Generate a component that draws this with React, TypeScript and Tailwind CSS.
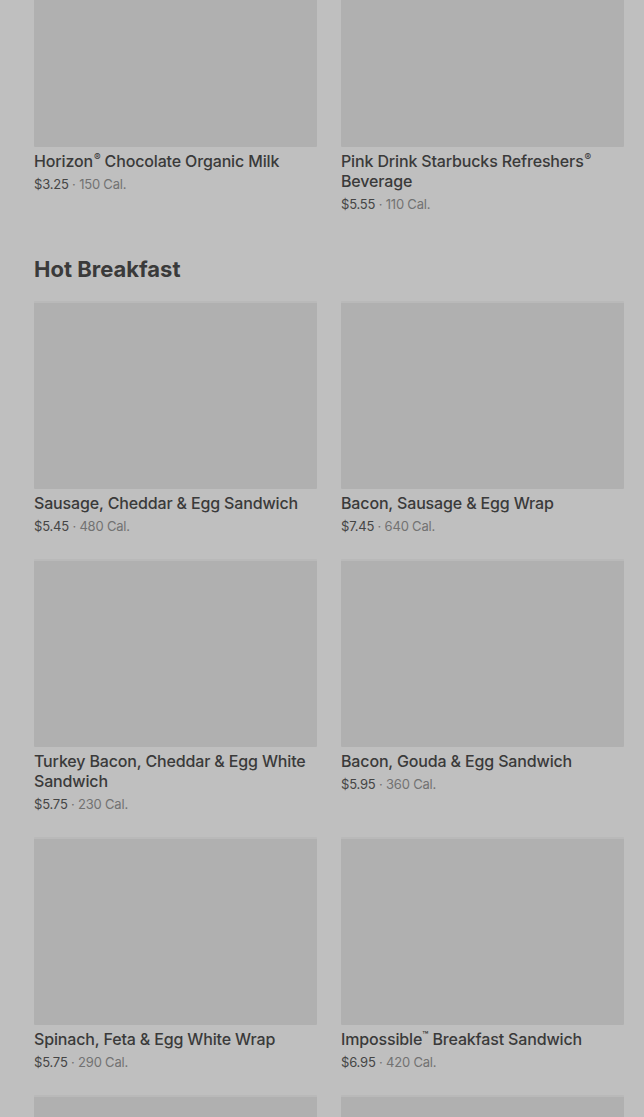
import React from "react";

type Item = { name: React.ReactNode; price: string; cal: string };

const R = () => <span className="text-[10px] leading-none align-top relative top-[1px] ml-[1px]">®</span>;
const TM = () => <span className="text-[10px] leading-none align-top relative top-[1px]">™</span>;

const top: Item[] = [
  { name: <>Horizon<R /> Chocolate Organic Milk</>, price: "$3.25", cal: "150 Cal." },
  { name: <>Pink Drink Starbucks Refreshers<R /> Beverage</>, price: "$5.55", cal: "110 Cal." },
];

const hot: Item[] = [
  { name: "Sausage, Cheddar & Egg Sandwich", price: "$5.45", cal: "480 Cal." },
  { name: "Bacon, Sausage & Egg Wrap", price: "$7.45", cal: "640 Cal." },
  { name: "Turkey Bacon, Cheddar & Egg White Sandwich", price: "$5.75", cal: "230 Cal." },
  { name: "Bacon, Gouda & Egg Sandwich", price: "$5.95", cal: "360 Cal." },
  { name: "Spinach, Feta & Egg White Wrap", price: "$5.75", cal: "290 Cal." },
  { name: <>Impossible<TM /> Breakfast Sandwich</>, price: "$6.95", cal: "420 Cal." },
  { name: "", price: "", cal: "" },
  { name: "", price: "", cal: "" },
];

function Card({ item }: { item: Item }) {
  return (
    <div className="flex flex-col">
      <div className="h-[188px] shrink-0 bg-[#b0b0b0] border-t-[2px] border-[#b9b9b9] rounded-[1px]" />
      {item.price && (
        <>
          <div className="mt-1 h-auto text-[16px] leading-[20px] font-medium text-[#3a3a3a] tracking-[-0.15px]">
            {item.name}
          </div>
          <div className="mt-[3px] text-[13px] leading-[20px] text-[#454545] tracking-[-0.2px]">
            {item.price}
            <span className="text-[#727272]"> · {item.cal}</span>
          </div>
        </>
      )}
    </div>
  );
}

export default function App() {
  return (
    <div
      className="min-h-[1117px] bg-[#bfbfbf] overflow-hidden"
      style={{ fontFamily: "Inter, 'Noto Sans', sans-serif" }}
    >
      <div className="-mt-[41px] pl-[34px] pr-[20px]">
        <div className="grid grid-cols-2 gap-x-6 gap-y-[23px]">
          {top.map((it, i) => (
            <Card key={i} item={it} />
          ))}
        </div>
        <h2 className="mt-[41px] text-[22px] leading-[28px] font-bold text-[#3a3a3a] tracking-[0px]">
          Hot Breakfast
        </h2>
        <div className="mt-[18px] grid grid-cols-2 gap-x-6 gap-y-[23px]">
          {hot.map((it, i) => (
            <Card key={i} item={it} />
          ))}
        </div>
      </div>
    </div>
  );
}
